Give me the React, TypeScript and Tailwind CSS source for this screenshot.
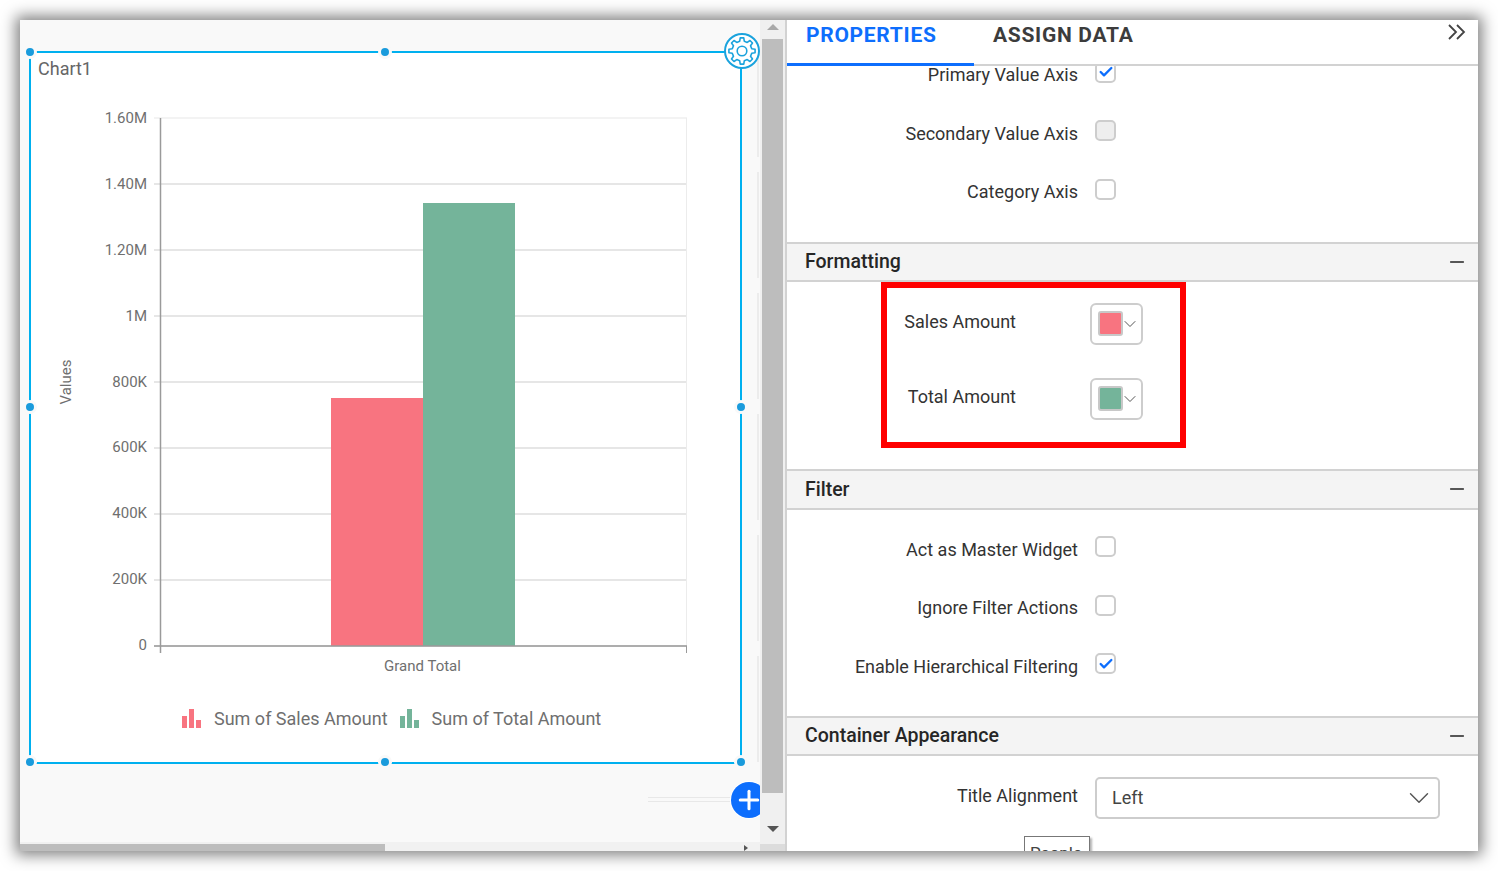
import { Check, ChevronDown, Minus, Plus } from "lucide-react";

const axisTicks = [
  { label: "1.60M", y: 118 },
  { label: "1.40M", y: 184 },
  { label: "1.20M", y: 250 },
  { label: "1M", y: 316 },
  { label: "800K", y: 382 },
  { label: "600K", y: 448 },
  { label: "400K", y: 514 },
  { label: "200K", y: 580 },
  { label: "0", y: 646 },
];

// faint edges of the widgets sitting further right on the canvas
const ghostEdges = [0, 1, 2, 3, 4, 5];

// teeth of the settings cog, worked out around 0,0
function cogPath(outer: number, inner: number, teeth: number) {
  const pts: string[] = [];
  const step = (Math.PI * 2) / teeth;
  for (let i = 0; i < teeth; i++) {
    const a = i * step - Math.PI / 2;
    const corners: [number, number][] = [
      [inner, a - step * 0.3],
      [outer, a - step * 0.17],
      [outer, a + step * 0.17],
      [inner, a + step * 0.3],
    ];
    corners.forEach(([r, t]) => {
      pts.push(`${(r * Math.cos(t)).toFixed(2)} ${(r * Math.sin(t)).toFixed(2)}`);
    });
  }
  return `M${pts.join("L")}Z`;
}

function Handle({ className }: { className: string }) {
  return (
    <span
      className={`absolute box-content h-[8px] w-[8px] -translate-x-1/2 -translate-y-1/2 rounded-full border-[3px] border-[#f9f9f9] bg-[#1a9bdc] ${className}`}
    />
  );
}

function BarLegendIcon({ color }: { color: string }) {
  return (
    <svg width="19" height="19" viewBox="0 0 19 19" className="shrink-0">
      <rect x="0" y="7" width="5" height="12" fill={color} />
      <rect x="7" y="0" width="5" height="19" fill={color} />
      <rect x="14" y="11" width="5" height="8" fill={color} />
    </svg>
  );
}

function Chart() {
  return (
    <svg width="680" height="570" viewBox="31 110 680 570" className="block">
      {axisTicks.map((t) => (
        <g key={t.label}>
          <line
            x1="154"
            x2="687"
            y1={t.y}
            y2={t.y}
            stroke={t.y === 118 ? "#efefef" : "#dedede"}
            strokeWidth="1.5"
          />
          <text
            x="147"
            y={t.y >= 448 ? t.y + 4 : t.y + 5}
            textAnchor="end"
            fontSize="15"
            fill="#6f6f6f"
            fontFamily="Roboto, sans-serif"
          >
            {t.label}
          </text>
        </g>
      ))}
      <line x1="686.5" x2="686.5" y1="118" y2="646" stroke="#ececec" />
      <rect x="331" y="398" width="92" height="248" fill="#f87480" />
      <rect x="423" y="203" width="92" height="443" fill="#74b49a" />
      <line x1="160.5" x2="160.5" y1="118" y2="653" stroke="#9a9a9a" strokeWidth="1.5" />
      <line x1="154" x2="687" y1="646" y2="646" stroke="#9a9a9a" strokeWidth="1.5" />
      <line x1="686.5" x2="686.5" y1="646" y2="653" stroke="#9a9a9a" />
      <text
        x="422.5"
        y="671"
        textAnchor="middle"
        fontSize="15"
        fill="#6f6f6f"
        fontFamily="Roboto, sans-serif"
      >
        Grand Total
      </text>
      <text
        transform="translate(71 382) rotate(-90)"
        textAnchor="middle"
        fontSize="15"
        fill="#6f6f6f"
        fontFamily="Roboto, sans-serif"
      >
        Values
      </text>
    </svg>
  );
}

function CheckRow({
  label,
  checked,
  disabled,
}: {
  label: string;
  checked?: boolean;
  disabled?: boolean;
}) {
  return (
    <div className="flex h-[58.5px] items-center">
      <span className="w-[291px] pt-1 text-right text-[18px] leading-none text-[#333]">{label}</span>
      <span
        className={`-mt-[2px] ml-[17px] flex h-[21px] w-[21px] items-center justify-center rounded-[5px] border-2 border-[#cdcdcd] ${
          disabled ? "bg-[#eeeeee]" : "bg-white"
        }`}
      >
        {checked && <Check size={16} strokeWidth={3.5} className="text-[#0d6efd]" />}
      </span>
    </div>
  );
}

function SectionHeader({ title, className }: { title: string; className: string }) {
  return (
    <div
      className={`flex shrink-0 items-center justify-between border-y-2 border-[#d2d2d2] bg-[#f4f4f4] pr-[10px] pl-[18px] ${className}`}
    >
      <span className="pt-px text-[19.5px] font-medium text-[#262626]">{title}</span>
      <Minus size={22} strokeWidth={1.4} className="text-[#222]" />
    </div>
  );
}

function ColorRow({ label, color }: { label: string; color: string }) {
  return (
    <div className="flex h-[42px] items-center">
      <span className="w-[129px] pb-[4px] text-right text-[18px] leading-none text-[#333]">{label}</span>
      <span className="ml-[74px] flex h-[42px] w-[53px] items-center rounded-[6px] border-2 border-[#cdcdcd] pl-[6px]">
        <span
          className="h-[25px] w-[25px] shrink-0 rounded-[3px] border-2 border-[#c8c8c8]"
          style={{ backgroundColor: color }}
        />
        <ChevronDown size={20} strokeWidth={1.2} className="-ml-[3px] shrink-0 text-[#555]" />
      </span>
    </div>
  );
}

export default function App() {
  const cog = cogPath(13.2, 10, 8);
  return (
    <div className="h-[871px] w-[1498px] overflow-hidden bg-white p-5 font-['Roboto',sans-serif]">
      <div className="flex h-[831px] w-[1458px] overflow-hidden shadow-[0_0_14px_4px_rgba(0,0,0,0.5)]">
        {/* designer canvas */}
        <div className="relative flex w-[740px] shrink-0 flex-col overflow-hidden bg-[#f9f9f9]">
          <div className="absolute top-[31px] left-[737px] flex flex-col gap-[15px]">
            {ghostEdges.map((i) => (
              <span key={i} className="h-[106px] w-[3px] border-l-2 border-[#ececec]" />
            ))}
          </div>

          <div className="relative flex-1 pt-[31px] pl-[9px]">
            <div className="relative h-[713px] w-[713px] border-2 border-[#00b0ef] bg-white">
              <p className="pt-[4px] pl-[7px] text-[18px] leading-[24px] text-[#666]">Chart1</p>
              <div className="mt-[29px]">
                <Chart />
              </div>
              <div className="mt-[29px] flex items-center pl-[151px] text-[18px] leading-none text-[#6f6f6f]">
                <BarLegendIcon color="#f87480" />
                <span className="ml-[13px]">Sum of Sales Amount</span>
                <span className="ml-[12px]">
                  <BarLegendIcon color="#74b49a" />
                </span>
                <span className="ml-[13px]">Sum of Total Amount</span>
              </div>
              <Handle className="-top-px -left-px" />
              <Handle className="-top-px left-[354px]" />
              <Handle className="top-[354px] -left-px" />
              <Handle className="top-[354px] left-[710px]" />
              <Handle className="top-[709px] -left-px" />
              <Handle className="top-[709px] left-[354px]" />
              <Handle className="top-[709px] left-[710px]" />
              <span className="absolute -top-[20px] -right-[20px] flex h-[36px] w-[36px] items-center justify-center rounded-full border-2 border-[#1ba3dd] bg-white">
                <svg width="32" height="32" viewBox="-16 -16 32 32" fill="none" stroke="#1ba3dd" strokeWidth="1.6">
                  <path d={cog} strokeLinejoin="round" />
                  <circle r="4.8" />
                </svg>
              </span>
            </div>
          </div>

          {/* add widget button with its faint connector */}
          <div className="absolute top-[777px] left-[628px] h-[5px] w-[83px] border-y border-[#e8e8e8]" />
          <span className="absolute top-[762px] left-[711px] flex h-[36px] w-[36px] items-center justify-center rounded-full bg-[#0d6efd] shadow-[0_0_0_1px_white]">
            <Plus size={30} strokeWidth={2.4} className="text-white" />
          </span>

          {/* horizontal scrollbar */}
          <div className="relative flex h-[9px] shrink-0 items-end border-t-2 border-[#f1f1f1] bg-[#f1f1f1] pr-[12px]">
            <div className="h-[7px] w-[365px] bg-[#bdbdbd]" />
            <span className="ml-auto h-0 w-0 border-y-[3px] border-l-[4px] border-y-transparent border-l-[#555]" />
          </div>
        </div>

        {/* vertical scrollbar */}
        <div className="flex w-[25px] shrink-0 flex-col items-center bg-[#f0f0f0]">
          <span className="mt-[4px] h-0 w-0 border-x-[6px] border-b-[6px] border-x-transparent border-b-[#a8a8a8]" />
          <div className="mt-[9px] h-[754px] w-[21px] bg-[#bdbdbd]" />
          <span className="mt-[33px] h-0 w-0 border-x-[6px] border-t-[6px] border-x-transparent border-t-[#555]" />
          <div className="mt-auto h-[7px] w-full bg-[#dcdcdc]" />
        </div>

        {/* properties panel */}
        <div className="relative flex min-w-0 flex-1 flex-col overflow-hidden border-l-2 border-[#d2d2d2] bg-white">
          <div className="relative z-10 flex h-[46px] shrink-0 border-b-2 border-[#d2d2d2] bg-white">
            <div className="-mb-[2px] h-[46px] w-[187px] border-b-[3px] border-[#0d6efd] pt-[1px] pl-[19px] text-[21px] leading-[28px] font-bold tracking-[0.7px] text-[#0d6efd]">
              PROPERTIES
            </div>
            <div className="pt-[1px] pl-[19px] text-[21px] leading-[28px] font-bold tracking-[0.7px] text-[#3c3c3c]">
              ASSIGN DATA
            </div>
            <svg
              width="18"
              height="16"
              viewBox="0 0 18 16"
              fill="none"
              stroke="#444"
              strokeWidth="1.8"
              className="absolute top-[4px] right-[12px]"
            >
              <polyline points="1,1 8,8 1,15" />
              <polyline points="9,1 16,8 9,15" />
            </svg>
          </div>

          <div className="-mt-[22px] shrink-0">
            <CheckRow label="Primary Value Axis" checked />
            <CheckRow label="Secondary Value Axis" disabled />
            <CheckRow label="Category Axis" />
          </div>
          <div className="h-[22px] shrink-0" />

          <SectionHeader title="Formatting" className="h-[40px]" />
          <div className="h-[187px] shrink-0">
            <div className="ml-[94px] flex h-[166px] w-[305px] flex-col gap-[33px] border-[6px] border-[#ff0000] pt-[15px]">
              <ColorRow label="Sales Amount" color="#f87480" />
              <ColorRow label="Total Amount" color="#74b49a" />
            </div>
          </div>

          <SectionHeader title="Filter" className="h-[41px]" />
          <div className="h-[206px] shrink-0 pt-[9px]">
            <CheckRow label="Act as Master Widget" />
            <CheckRow label="Ignore Filter Actions" />
            <CheckRow label="Enable Hierarchical Filtering" checked />
          </div>

          <SectionHeader title="Container Appearance" className="h-[40px]" />
          <div className="flex items-center pt-[21px]">
            <span className="w-[291px] pb-[3px] text-right text-[18px] leading-none text-[#333]">
              Title Alignment
            </span>
            <div className="ml-[17px] flex h-[42px] w-[345px] items-center justify-between rounded-[5px] border-2 border-[#cdcdcd] pr-[2px] pl-[15px] text-[18px] text-[#444]">
              Left
              <ChevronDown size={34} strokeWidth={1} className="text-[#555]" />
            </div>
          </div>

          {/* tooltip cut off by the panel edge */}
          <div className="absolute top-[816px] left-[237px] h-[34px] w-[66px] border border-[#777] bg-white pt-[5px] pl-[5px] text-[17px] leading-[22px] text-[#444] shadow-[2px_2px_2px_rgba(0,0,0,0.3)]">
            People
          </div>
        </div>
      </div>
    </div>
  );
}
